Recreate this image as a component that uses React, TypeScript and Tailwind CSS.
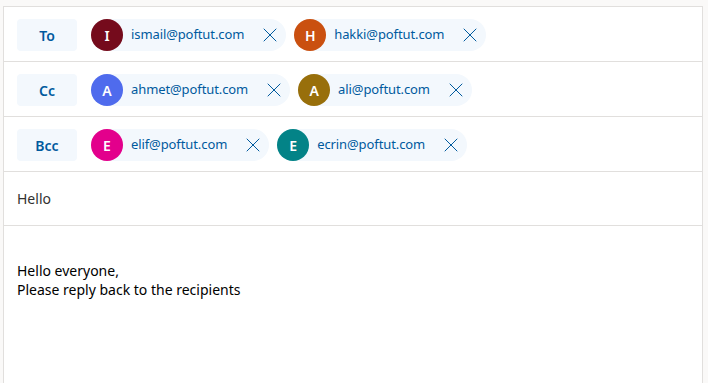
import { X } from 'lucide-react'

type Person = { initial: string; email: string; color: string }

const rows: { label: string; people: Person[] }[] = [
  {
    label: 'To',
    people: [
      { initial: 'I', email: 'ismail@poftut.com', color: 'bg-[#750b1c]' },
      { initial: 'H', email: 'hakki@poftut.com', color: 'bg-[#ca5010]' },
    ],
  },
  {
    label: 'Cc',
    people: [
      { initial: 'A', email: 'ahmet@poftut.com', color: 'bg-[#4f6bed]' },
      { initial: 'A', email: 'ali@poftut.com', color: 'bg-[#986f0b]' },
    ],
  },
  {
    label: 'Bcc',
    people: [
      { initial: 'E', email: 'elif@poftut.com', color: 'bg-[#e3008c]' },
      { initial: 'E', email: 'ecrin@poftut.com', color: 'bg-[#038387]' },
    ],
  },
]

function Chip({ person }: { person: Person }) {
  return (
    <div className="flex items-center h-8 rounded-full bg-[#f3f8fd]">
      <div
        className={`w-8 h-8 rounded-full ${person.color} flex items-center justify-center text-white text-[14px] font-semibold`}
      >
        {person.initial}
      </div>
      <span className="pl-2 pr-[10px] text-[13px] tracking-[-0.1px] text-[#005a9e]">{person.email}</span>
      <button className="w-8 h-8 flex items-center justify-center text-[#005a9e]">
        <X size={24} strokeWidth={1} />
      </button>
    </div>
  )
}

export default function App() {
  return (
    <div className="min-h-screen bg-[#faf9f8] pt-[6px] pl-[3px] pr-[5px] font-['Noto_Sans',sans-serif]">
      <div className="h-[377px] bg-white border-l border-r border-t border-[#e1dfdd] flex flex-col">
        {rows.map((row) => (
          <div key={row.label} className="flex items-center gap-[14px] pl-[13px] pt-3 pb-[10px] border-b border-[#e1dfdd]">
            <div className="w-[60px] h-8 rounded-sm bg-[#f3f8fd] flex items-center justify-center text-[14px] font-semibold text-[#005a9e]">
              {row.label}
            </div>
            <div className="flex items-center gap-2">
              {row.people.map((p) => (
                <Chip key={p.email} person={p} />
              ))}
            </div>
          </div>
        ))}

        {/* Subject */}
        <div className="h-[54px] flex items-center pl-[13px] border-b border-[#e1dfdd] text-[14px] text-[#323130]">
          Hello
        </div>

        {/* Body */}
        <div className="pl-[13px] pt-[35px] text-[14px] leading-[19px] text-black">
          <p>Hello everyone,</p>
          <p>Please reply back to the recipients</p>
        </div>
      </div>
    </div>
  )
}
